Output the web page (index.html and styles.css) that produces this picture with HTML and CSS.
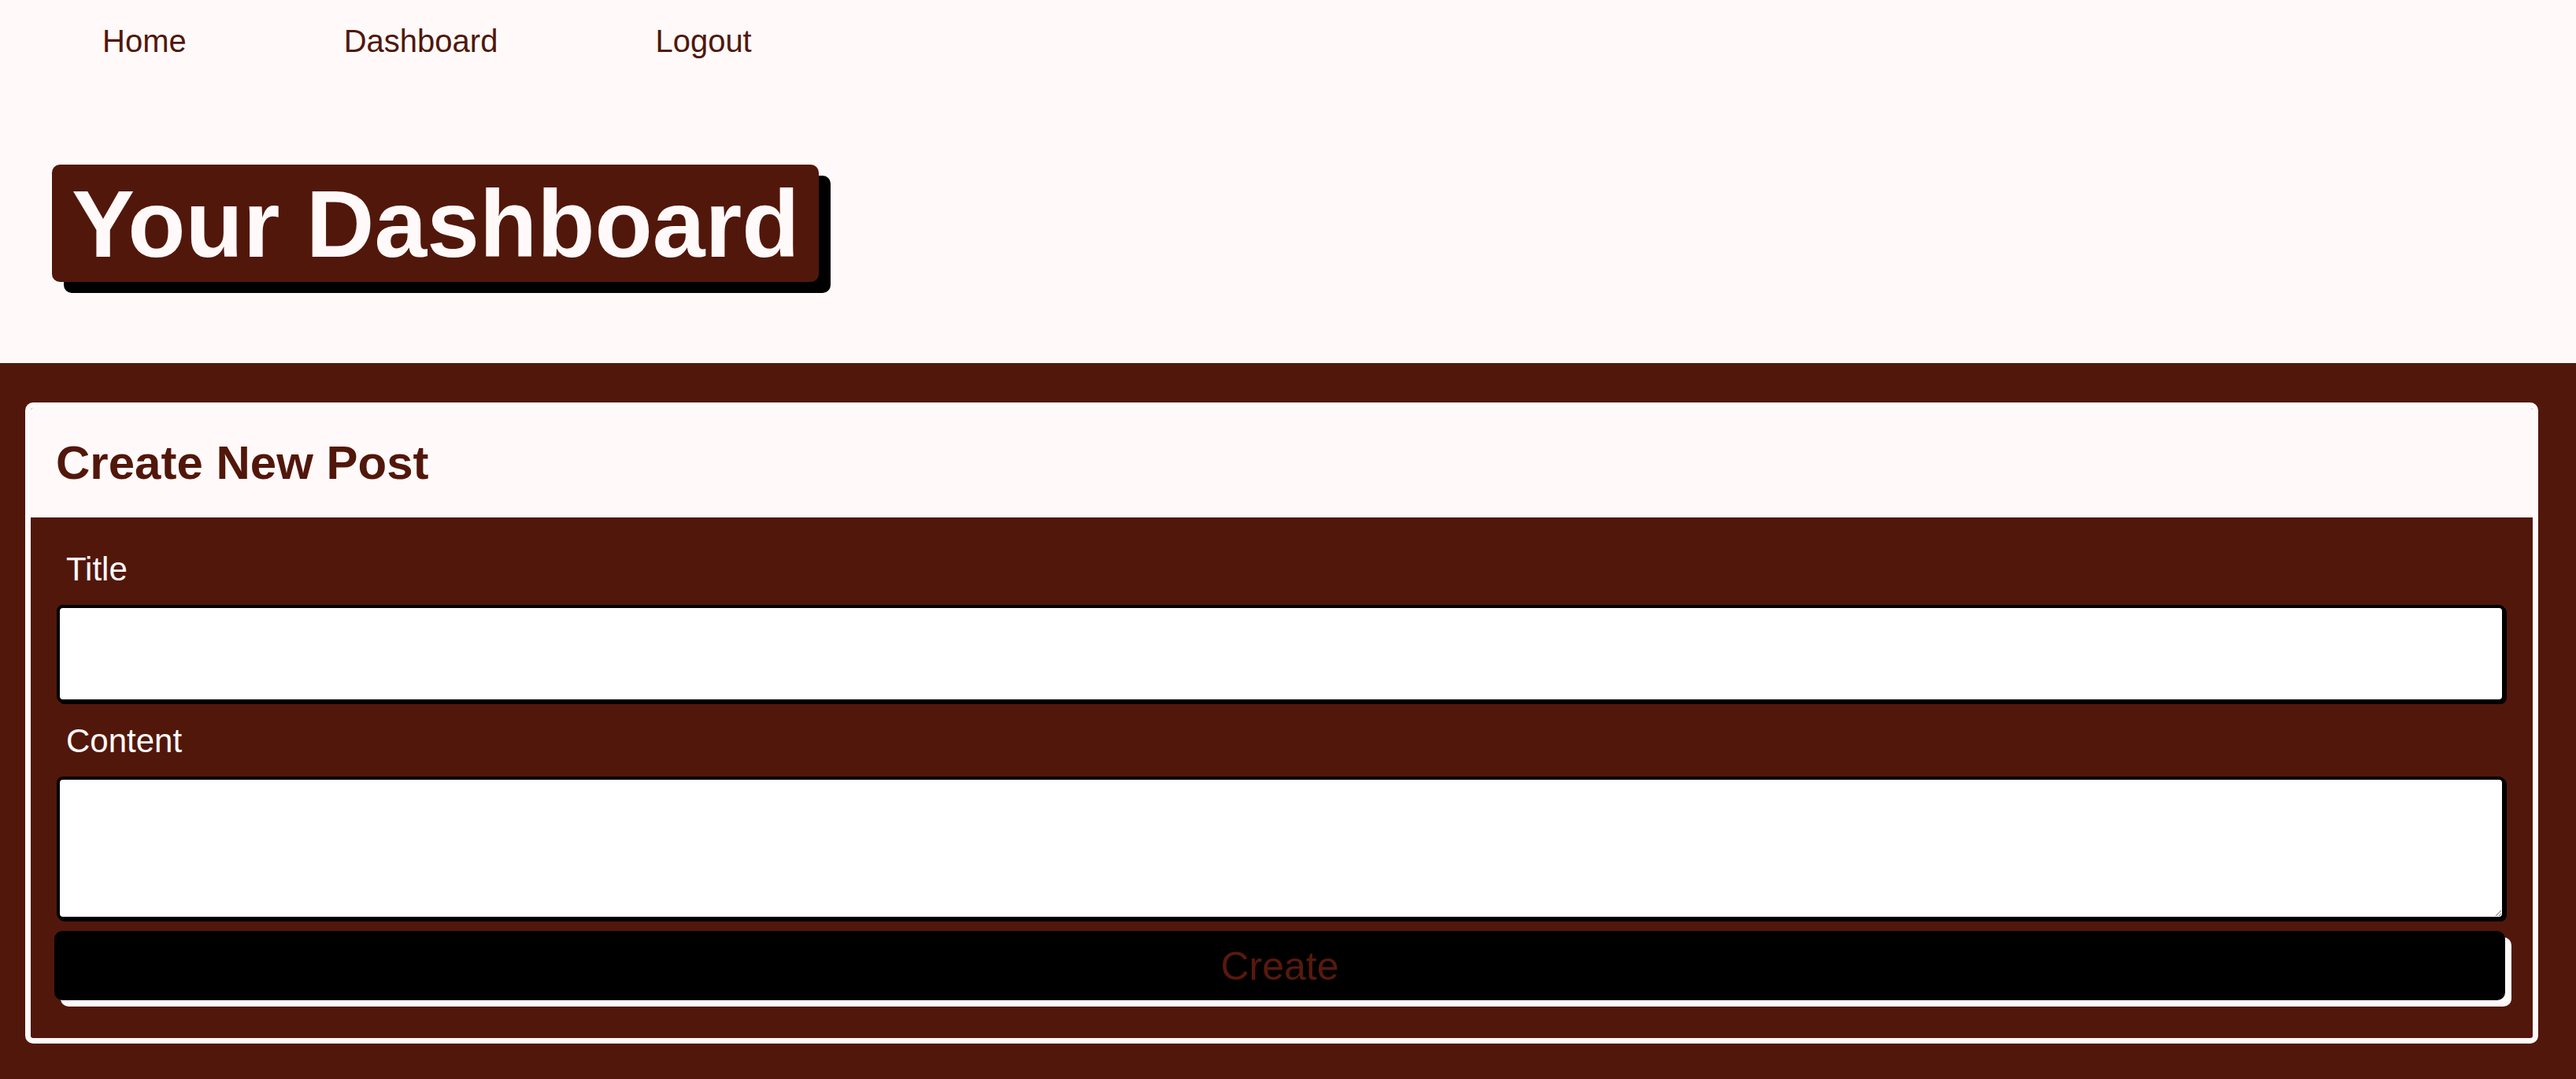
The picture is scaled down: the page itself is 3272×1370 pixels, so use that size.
FILE: index.html
```html
<!DOCTYPE html>
<html lang="en">
<head>
<meta charset="utf-8">
<title>Your Dashboard</title>
<link rel="stylesheet" href="styles.css">
</head>
<body>
<header class="site-header">
  <nav class="nav">
    <a class="nav-link" href="#">Home</a>
    <a class="nav-link" href="#">Dashboard</a>
    <a class="nav-link" href="#">Logout</a>
  </nav>
</header>
<div class="title-wrap">
  <h1 class="page-title">Your Dashboard</h1>
</div>
<main class="main">
  <section class="card">
    <div class="card-header">
      <h2 class="card-title">Create New Post</h2>
    </div>
    <form class="post-form">
      <label class="field-label" for="title">Title</label>
      <input class="field-input" id="title" type="text">
      <label class="field-label" for="content">Content</label>
      <textarea class="field-textarea" id="content"></textarea>
      <button class="submit-btn" type="button">Create</button>
    </form>
  </section>
</main>
</body>
</html>
```
FILE: styles.css
```css
* { box-sizing: border-box; }

html, body {
  margin: 0;
  padding: 0;
  background: #fffaf9;
  font-family: "Liberation Sans", Arial, sans-serif;
}

.site-header {
  padding: 29px 0 0 30px;
}

.nav {
  display: flex;
}

.nav-link {
  padding: 0 100px;
  font-size: 40px;
  line-height: 46px;
  color: #52170b;
  text-decoration: none;
}

.title-wrap {
  padding: 134px 0 103px 66px;
}

.page-title {
  display: inline-block;
  vertical-align: top;
  margin: 0;
  padding: 6px 24px 5px 25px;
  font-size: 120px;
  line-height: 138px;
  font-weight: 700;
  color: #fffaf9;
  background: #52170b;
  border-radius: 10px;
  box-shadow: 15px 14px 0 #000;
}

.main {
  background: #52170b;
  padding: 50px 48px 50px 32px;
}

.card {
  border: 7px solid #fffaf9;
  border-radius: 10px;
  background: #52170b;
  overflow: hidden;
}

.card-header {
  background: #fffaf9;
  padding: 35px 32px;
}

.card-title {
  margin: 0;
  font-size: 60px;
  line-height: 69px;
  font-weight: 700;
  color: #52170b;
}

.post-form {
  display: flex;
  flex-direction: column;
  padding: 42px 35px 48px 30px;
}

.field-label {
  display: block;
  margin: 0 0 21px 15px;
  font-size: 42px;
  line-height: 48px;
  color: #fffaf9;
}

.field-input,
.field-textarea {
  display: block;
  margin: 0 0 25px 3px;
  width: calc(100% - 3px);
  background: #fff;
  border: 4px solid #000;
  border-radius: 8px;
  box-shadow: 2px 2px 0 #000;
  font-family: "Liberation Sans", Arial, sans-serif;
  font-size: 40px;
  padding: 8px 16px;
  outline: none;
}

.field-input {
  height: 124px;
}

.field-textarea {
  height: 182px;
  margin-bottom: 14px;
}

.submit-btn {
  display: block;
  width: 100%;
  height: 88px;
  margin: 0;
  padding: 2px 0 0;
  border: none;
  border-radius: 10px;
  background: #000;
  color: #58190c;
  font-family: "Liberation Sans", Arial, sans-serif;
  font-size: 50px;
  box-shadow: 8px 8px 0 #fffaf9;
  cursor: pointer;
}
```
